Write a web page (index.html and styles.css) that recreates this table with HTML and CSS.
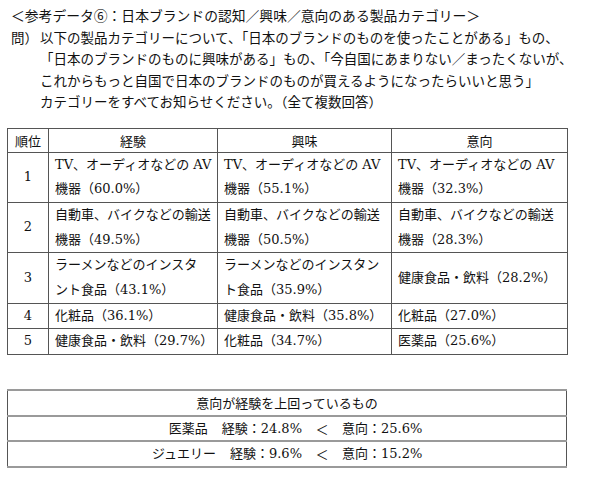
FILE: index.html
```html
<!DOCTYPE html>
<html lang="ja">
<head>
<meta charset="utf-8">
<title>参考データ⑥</title>
<link rel="stylesheet" href="styles.css">
</head>
<body>
<div class="page">
  <div class="intro">
    <div class="title">＜参考データ⑥：日本ブランドの認知／興味／意向のある製品カテゴリー＞</div>
    <div class="question"><span class="qmark">問）</span>以下の製品カテゴリーについて、「日本のブランドのものを使ったことがある」もの、<br>「日本のブランドのものに興味がある」もの、「今自国にあまりない／まったくないが、<br>これからもっと自国で日本のブランドのものが買えるようになったらいいと思う」<br>カテゴリーをすべてお知らせください。（全て複数回答）</div>
  </div>

  <table class="rank">
    <colgroup>
      <col class="c-rank"><col class="c-exp"><col class="c-int"><col class="c-wish">
    </colgroup>
    <thead>
      <tr><th>順位</th><th>経験</th><th>興味</th><th>意向</th></tr>
    </thead>
    <tbody>
      <tr>
        <td class="num">1</td>
        <td>TV、オーディオなどの AV<br>機器（60.0%）</td>
        <td>TV、オーディオなどの AV<br>機器（55.1%）</td>
        <td>TV、オーディオなどの AV<br>機器（32.3%）</td>
      </tr>
      <tr>
        <td class="num">2</td>
        <td>自動車、バイクなどの輸送<br>機器（49.5%）</td>
        <td>自動車、バイクなどの輸送<br>機器（50.5%）</td>
        <td>自動車、バイクなどの輸送<br>機器（28.3%）</td>
      </tr>
      <tr>
        <td class="num">3</td>
        <td>ラーメンなどのインスタ<br>ント食品（43.1%）</td>
        <td>ラーメンなどのインスタン<br>ト食品（35.9%）</td>
        <td>健康食品・飲料（28.2%）</td>
      </tr>
      <tr>
        <td class="num">4</td>
        <td>化粧品（36.1%）</td>
        <td>健康食品・飲料（35.8%）</td>
        <td>化粧品（27.0%）</td>
      </tr>
      <tr>
        <td class="num">5</td>
        <td>健康食品・飲料（29.7%）</td>
        <td>化粧品（34.7%）</td>
        <td>医薬品（25.6%）</td>
      </tr>
    </tbody>
  </table>

  <table class="compare">
    <tr><th>意向が経験を上回っているもの</th></tr>
    <tr><td><div class="cmp"><span class="left">医薬品<span class="sp"></span>経験：24.8%</span><span class="lt">＜</span><span class="right">意向：25.6%</span></div></td></tr>
    <tr><td><div class="cmp"><span class="left">ジュエリー<span class="sp"></span>経験：9.6%</span><span class="lt">＜</span><span class="right">意向：15.2%</span></div></td></tr>
  </table>
</div>
</body>
</html>
```

FILE: styles.css
```css
html, body {
  margin: 0;
  padding: 0;
  background: #ffffff;
}

body {
  color: #111111;
  font-family: "Noto Sans CJK JP", sans-serif;
}

.page {
  padding: 5px 0 0 7px;
  display: flex;
  flex-direction: column;
  align-items: flex-start;
}

.intro {
  padding-left: 4px;
  font-size: 13.5px;
  line-height: 21.5px;
  white-space: nowrap;
}

.title {
  font-size: 13.8px;
}

.question {
  padding-left: 29px;
  text-indent: -29px;
}

.qmark {
  display: inline-block;
  width: 29px;
  text-indent: 0;
}

.rank {
  margin-top: 15px;
  border-collapse: collapse;
  width: 560px;
  table-layout: fixed;
  font-family: "DejaVu Serif", "Noto Sans CJK JP", serif;
  font-size: 13px;
}

.c-rank { width: 41px; }
.c-exp { width: 169px; }
.c-int { width: 174px; }
.c-wish { width: 176px; }

.rank th,
.rank td {
  border: 1px solid #555555;
  padding: 0 6px;
  white-space: nowrap;
  line-height: 24.7px;
  text-align: left;
  vertical-align: middle;
  overflow: hidden;
}

.rank th {
  font-weight: normal;
  text-align: center;
  line-height: 23px;
  padding: 0;
  font-family: "Noto Sans CJK JP", sans-serif;
}

.rank td.num {
  text-align: center;
  padding: 0;
}

.compare {
  margin-top: 34px;
  border-collapse: collapse;
  width: 560px;
  font-family: "DejaVu Serif", "Noto Sans CJK JP", serif;
  font-size: 13px;
}

.compare th,
.compare td {
  border-top: 2px solid #9a9a9a;
  border-bottom: 2px solid #9a9a9a;
  border-left: 1px solid #555555;
  border-right: 1px solid #555555;
  padding: 0;
  line-height: 23.5px;
  font-weight: normal;
}

.compare th {
  text-align: center;
  font-family: "Noto Sans CJK JP", sans-serif;
}

.cmp {
  display: grid;
  grid-template-columns: 294px 40px 1fr;
  white-space: nowrap;
}

.cmp .left {
  text-align: right;
}

.cmp .sp {
  display: inline-block;
  width: 14px;
}

.cmp .lt {
  text-align: center;
  font-family: "Noto Sans CJK JP", sans-serif;
}

.cmp .right {
  text-align: left;
}
```
